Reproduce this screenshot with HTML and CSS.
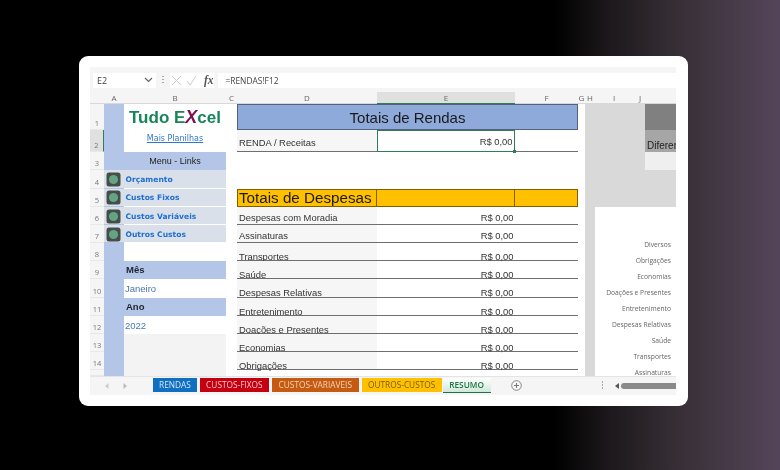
FILE: index.html
```html
<!DOCTYPE html>
<html lang="pt-BR">
<head>
<meta charset="utf-8">
<title>Tudo Excel</title>
<link rel="stylesheet" href="styles.css">
</head>
<body>
<main class="card">
<div class="excel">
  <div class="fbar">
    <div class="namebox"><span>E2</span><svg width="9" height="6" viewBox="0 0 9 6"><path d="M1 1l3.5 3.5L8 1" fill="none" stroke="#666" stroke-width="1.2"/></svg></div>
    <div class="vdots"><i></i><i></i><i></i></div>
    <div class="fbtns">
      <svg width="11" height="11" viewBox="0 0 11 11"><path d="M1 1l9 9M10 1l-9 9" fill="none" stroke="#ccc" stroke-width="1"/></svg>
      <svg width="11" height="11" viewBox="0 0 11 11"><path d="M1 6l3 4 6-9" fill="none" stroke="#ccc" stroke-width="1"/></svg>
      <span class="fx">fx</span>
    </div>
    <div class="finput">=RENDAS!F12</div>
  </div>
  <div class="sheet">
    <div class="ch corner"></div><div class="ch">A</div><div class="ch">B</div><div class="ch">C</div><div class="ch">D</div><div class="ch chsel">E</div><div class="ch">F</div><div class="ch">G</div><div class="ch">H</div><div class="ch">I</div><div class="ch">J</div><div class="ch"></div>

    <div class="rh">1</div><div class="rh rhsel">2</div><div class="rh">3</div><div class="rh">4</div><div class="rh">5</div><div class="rh">6</div><div class="rh">7</div><div class="rh">8</div><div class="rh">9</div><div class="rh">10</div><div class="rh">11</div><div class="rh">12</div><div class="rh">13</div><div class="rh">14</div><div class="rh"></div>

    <div class="strip"></div>
    <div class="logo">
      <div class="brand">Tudo E<span class="x">X</span>cel</div>
      <a class="more">Mais Planilhas</a>
    </div>
    <div class="mhead">Menu - Links</div>
    <div class="menu m4"><svg class="ico" width="15" height="15" viewBox="0 0 15 15"><rect x=".5" y=".5" width="14" height="14" rx="2.5" fill="#454d48"/><circle cx="7.5" cy="7.5" r="4.6" fill="#63a386"/></svg>Orçamento</div>
    <div class="menu m5"><svg class="ico" width="15" height="15" viewBox="0 0 15 15"><rect x=".5" y=".5" width="14" height="14" rx="2.5" fill="#454d48"/><circle cx="7.5" cy="7.5" r="4.6" fill="#63a386"/></svg>Custos Fixos</div>
    <div class="menu m6"><svg class="ico" width="15" height="15" viewBox="0 0 15 15"><rect x=".5" y=".5" width="14" height="14" rx="2.5" fill="#454d48"/><circle cx="7.5" cy="7.5" r="4.6" fill="#63a386"/></svg>Custos Variáveis</div>
    <div class="menu m7"><svg class="ico" width="15" height="15" viewBox="0 0 15 15"><rect x=".5" y=".5" width="14" height="14" rx="2.5" fill="#454d48"/><circle cx="7.5" cy="7.5" r="4.6" fill="#63a386"/></svg>Outros Custos</div>
    <div class="lbl l9">Mês</div>
    <div class="val v10">Janeiro</div>
    <div class="lbl l11">Ano</div>
    <div class="val v12">2022</div>
    <div class="blank"></div>

    <div class="title rendas">Totais de Rendas</div>
    <div class="cd r2">RENDA / Receitas</div>
    <div class="ce r2 sel">R$ 0,00<b class="handle"></b></div>
    <div class="cf r2"></div>

    <div class="title desp">Totais de Despesas</div>
    <div class="ybox yE"></div>
    <div class="ybox yF"></div>

    <div class="cd r5">Despesas com Moradia</div><div class="ce r5">R$ 0,00</div><div class="cf r5"></div>
    <div class="cd r6">Assinaturas</div><div class="ce r6">R$ 0,00</div><div class="cf r6"></div>
    <div class="cd r7 low">Transportes</div><div class="ce r7 low">R$ 0,00</div><div class="cf r7"></div>
    <div class="cd r8 low">Saúde</div><div class="ce r8 low">R$ 0,00</div><div class="cf r8"></div>
    <div class="cd r9 low">Despesas Relativas</div><div class="ce r9 low">R$ 0,00</div><div class="cf r9"></div>
    <div class="cd r10 low">Entretenimento</div><div class="ce r10 low">R$ 0,00</div><div class="cf r10"></div>
    <div class="cd r11 low">Doações e Presentes</div><div class="ce r11 low">R$ 0,00</div><div class="cf r11"></div>
    <div class="cd r12 low">Economias</div><div class="ce r12 low">R$ 0,00</div><div class="cf r12"></div>
    <div class="cd r13 low">Obrigações</div><div class="ce r13 low">R$ 0,00</div><div class="cf r13"></div>

    <div class="side">
      <div class="sblocks">
        <div class="sdark"></div>
        <div class="smid">Diferen</div>
        <div class="slight"></div>
      </div>
      <div class="chart">
        <span>Diversos</span><span>Obrigações</span><span>Economias</span><span>Doações e Presentes</span><span>Entretenimento</span><span>Despesas Relativas</span><span>Saúde</span><span>Transportes</span><span>Assinaturas</span>
      </div>
    </div>
  </div>
  <div class="tabs">
    <div class="nav"><svg width="4" height="6" viewBox="0 0 4 6"><path d="M3.5 0v6L0 3z" fill="#ccc"/></svg><svg width="4" height="6" viewBox="0 0 4 6"><path d="M.5 0v6L4 3z" fill="#bbb"/></svg></div>
    <div class="tab t-blue">RENDAS</div>
    <div class="tab t-red">CUSTOS-FIXOS</div>
    <div class="tab t-orange">CUSTOS-VARIAVEIS</div>
    <div class="tab t-yellow">OUTROS-CUSTOS</div>
    <div class="tab t-active">RESUMO</div>
    <svg class="plus" width="11" height="11" viewBox="0 0 11 11"><circle cx="5.5" cy="5.5" r="4.8" fill="none" stroke="#888"/><path d="M5.5 3v5M3 5.500h5" stroke="#777"/></svg>
    <div class="vdots tabdots"><i></i><i></i><i></i></div>
    <svg class="arrow" width="4" height="6" viewBox="0 0 4 6"><path d="M4 0v6L0 3z" fill="#555"/></svg>
    <div class="thumb"></div>
  </div>
</div>
</main>
</body>
</html>
```
FILE: styles.css
```css
* { box-sizing: border-box; }
html, body { margin: 0; height: 100%; }
body {
  width: 780px;
  height: 470px;
  overflow: hidden;
  padding: 56px 0 0 79px;
  background: linear-gradient(90deg, #000 0, #000 71%, #1c181b 78%, #352d34 86%, #473b49 94%, #55455a 100%);
  font-family: "Liberation Sans", Arial, sans-serif;
}
.card {
  width: 609px;
  height: 350px;
  background: #fff;
  border-radius: 9px;
  padding: 11px 12px 11px 11px;
}
.excel {
  width: 586px;
  height: 328px;
  display: flex;
  flex-direction: column;
  background: #f5f5f5;
  filter: blur(.5px);
  overflow: hidden;
}
.fbar {
  height: 25px;
  flex: none;
  display: flex;
  align-items: flex-start;
  padding: 5.500px 0 0 3px;
}
.namebox {
  width: 63px;
  height: 15.500px;
  background: #fff;
  display: flex;
  align-items: center;
  justify-content: space-between;
  padding: 0 3px 0 4px;
  font: 9px "Open Sans", sans-serif;
  color: #444;
}
.vdots { display: flex; flex-direction: column; gap: 1.500px; }
.vdots i { display: block; width: 1.500px; height: 1.500px; background: #aaa; }
.fbar .vdots { margin: 3px 6.500px 0 6px; }
.fbtns {
  width: 44px;
  height: 15.500px;
  background: #fff;
  display: flex;
  align-items: center;
  gap: 4px;
  padding-left: 1px;
  margin-right: 4px;
}
.fx { font: italic bold 11.500px "Liberation Serif", serif; color: #555; margin-left: 3px; }
.finput {
  flex: 1;
  height: 15.500px;
  background: #fff;
  font: 8.400px "Open Sans", sans-serif;
  color: #444;
  padding-left: 7.500px;
  line-height: 15px;
}
.sheet {
  flex: none;
  height: 284px;
  display: grid;
  grid-template-columns: 14px 20px 102px 11px 140px 138px 63px 7px 10px 38px 14px 29px;
  grid-template-rows: 12px 26px 22px 18px 18.500px 18.500px 18px 18px 18px 18px 19px 18px 18px 18px 18px 6px;
  background: #fff;
}
.ch {
  grid-row: 1;
  background: #f5f5f5;
  border-bottom: 1px solid #d8d8d8;
  font: 8px/11px "Open Sans", sans-serif;
  color: #666;
  text-align: center;
}
.chsel { background: #e0e0e0; border-bottom: 1px solid #2f7d58; }
.rh {
  grid-column: 1;
  background: #f5f5f5;
  border-bottom: 1px solid #e8e8e8;
  font: 7.500px/1 "Open Sans", sans-serif;
  color: #777;
  display: flex;
  align-items: flex-end;
  justify-content: center;
  padding-bottom: 1.500px;
}
.rhsel { background: #e0e0e0; border-right: 1px solid #2f7d58; }
.strip { grid-column: 2; grid-row: 2 / 17; background: #b4c6e7; }
.logo {
  grid-column: 3;
  grid-row: 2 / 4;
  background: #fff;
  text-align: center;
  padding-top: 3px;
}
.brand { font-size: 17px; line-height: 20px; font-weight: 700; color: #16855a; }
.x { color: #7d1150; font-style: italic; font-size: 18px; }
.more {
  display: block;
  margin-top: 6px;
  font: 8px/10px "DejaVu Sans", sans-serif;
  color: #2f78c8;
  text-decoration: underline;
}
.mhead {
  grid-column: 2 / 4;
  grid-row: 4;
  background: #b4c6e7;
  font-size: 9px;
  color: #222;
  text-align: center;
  padding-left: 20px;
  line-height: 19px;
}
.menu {
  grid-column: 2 / 4;
  background: #dae0ea;
  margin-bottom: 1px;
  padding-top: 1px;
  display: flex;
  align-items: center;
  font: 700 7.600px "DejaVu Sans", sans-serif;
  color: #1f6fd0;
}
.ico { margin: 0 5px 0 1.500px; flex: none; }
.m4 { grid-row: 5; } .m5 { grid-row: 6; } .m6 { grid-row: 7; } .m7 { grid-row: 8; }
.lbl {
  grid-column: 3;
  background: #b4c6e7;
  font: 700 9.500px/18px "Liberation Sans", sans-serif;
  color: #1c2233;
  padding-left: 2px;
}
.l9 { grid-row: 10; } .l11 { grid-row: 12; }
.val { grid-column: 3; font-size: 9.500px; line-height: 20px; color: #4a78b0; padding-left: 1px; background: #fff; }
.v10 { grid-row: 11; } .v12 { grid-row: 13; line-height: 19px; }
.blank { grid-column: 3; grid-row: 14 / 17; background: #f3f3f3; }
.title { color: #1a1a1a; font-size: 15.200px; display: flex; align-items: center; border: 1px solid #55627d; white-space: nowrap; }
.rendas { grid-column: 5 / 8; grid-row: 2; background: #8eaadb; justify-content: center; font-size: 15px; }
.desp { grid-column: 5; grid-row: 6; background: #ffc000; padding-left: 1px; border-color: #7f6000; }
.ybox { grid-row: 6; background: #ffc000; border: 1px solid #7f6000; border-left: 0; }
.yE { grid-column: 6; } .yF { grid-column: 7; }
.cd, .ce, .cf {
  border-bottom: 1px solid #6e6e6e;
  font-size: 9.400px;
  color: #333;
  display: flex;
  align-items: center;
  padding-top: 4px;
}
.cd { grid-column: 5; background: #f6f6f6; padding-left: 2px; }
.ce { grid-column: 6; justify-content: flex-end; padding-right: 1.500px; position: relative; }
.cf { grid-column: 7; }
.low { padding-top: 9px; }
.r2 { grid-row: 3; } .r5 { grid-row: 7; } .r6 { grid-row: 8; } .r7 { grid-row: 9; }
.r8 { grid-row: 10; } .r9 { grid-row: 11; } .r10 { grid-row: 12; } .r11 { grid-row: 13; }
.r12 { grid-row: 14; } .r13 { grid-row: 15; }
.sel { border: 1px solid #2f7d58; padding-top: 0; }
.handle { position: absolute; right: -2px; bottom: -2px; width: 3px; height: 3px; background: #2f7d58; }
.side {
  grid-column: 9 / 13;
  grid-row: 2 / 17;
  background: #d9d9d9;
  display: flex;
  flex-direction: column;
  overflow: hidden;
}
.sblocks {
  height: 103px;
  flex: none;
  margin-left: 60px;
  display: flex;
  flex-direction: column;
}
.sdark { height: 26px; background: #808080; }
.smid { height: 22px; background: #a6a6a6; font-size: 10px; line-height: 32px; color: #222; white-space: nowrap; overflow: hidden; padding-left: 2px; }
.slight { height: 18px; background: #efefef; }
.chart {
  flex: 1;
  margin-left: 10px;
  background: #fff;
  display: flex;
  flex-direction: column;
  align-items: flex-end;
  gap: 6px;
  padding: 33px 5px 0 0;
  font: 6.700px/10px "Open Sans", sans-serif;
  color: #666;
}
.tabs {
  flex: 1;
  display: flex;
  align-items: flex-start;
  padding-top: 1px;
  background: #f5f5f5;
  border-top: 1px solid #e4e4e4;
}
.nav { width: 63px; display: flex; gap: 14px; padding: 5px 0 0 15px; }
.tab {
  height: 14px;
  font: 8.300px/14px "Open Sans", sans-serif;
  text-align: center;
  margin-right: 3px;
}
.t-blue { width: 44px; background: #0f6fc0; color: #d5e6f5; }
.t-red { width: 69px; background: #c40010; color: #f5c5c8; }
.t-orange { width: 87px; background: #c55a11; color: #f5d5ba; }
.t-yellow { width: 80px; background: #ffc000; color: #7a5c00; margin-right: 1px; }
.t-active {
  width: 48px;
  margin-right: 0;
  background: linear-gradient(#fff, #cfe9db);
  border-bottom: 1px solid #217346;
  color: #217346;
  font-weight: 600;
  height: 15px;
}
.plus { margin: 2px 0 0 20px; flex: none; }
.tabdots { margin: 3px 0 0 80px; }
.arrow { margin: 5px 0 0 12px; flex: none; }
.thumb { width: 55px; height: 6px; margin: 5px 0 0 2px; background: #8a8a8a; border-radius: 3px 0 0 3px; }
```
